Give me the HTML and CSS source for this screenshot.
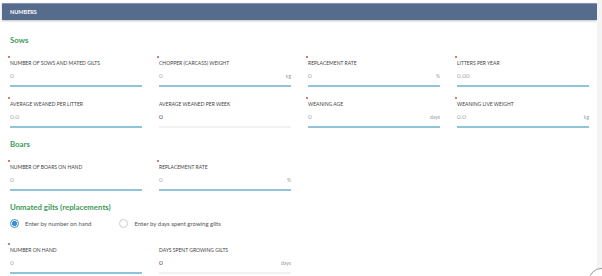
FILE: index.html
```html
<!DOCTYPE html>
<html>
<head>
  <meta charset="utf-8">
  <title>Numbers</title>
  <link rel="stylesheet" href="styles.css">
</head>
<body>
  <div class="page">
    <div class="panel">
      <div class="panel-header">NUMBERS</div>

      <div class="panel-body">
        <h2 class="section-title">Sows</h2>
        <div class="field-grid">
          <div class="field">
            <label class="field-label required">NUMBER OF SOWS AND MATED GILTS</label>
            <div class="field-input"><span class="value">0</span></div>
          </div>
          <div class="field">
            <label class="field-label required">CHOPPER (CARCASS) WEIGHT</label>
            <div class="field-input"><span class="value">0</span><span class="unit">kg</span></div>
          </div>
          <div class="field">
            <label class="field-label required">REPLACEMENT RATE</label>
            <div class="field-input"><span class="value">0</span><span class="unit">%</span></div>
          </div>
          <div class="field">
            <label class="field-label required">LITTERS PER YEAR</label>
            <div class="field-input"><span class="value">0.00</span></div>
          </div>
          <div class="field">
            <label class="field-label required">AVERAGE WEANED PER LITTER</label>
            <div class="field-input"><span class="value">0.0</span></div>
          </div>
          <div class="field">
            <label class="field-label">AVERAGE WEANED PER WEEK</label>
            <div class="field-input disabled"><span class="value">0</span></div>
          </div>
          <div class="field">
            <label class="field-label required">WEANING AGE</label>
            <div class="field-input"><span class="value">0</span><span class="unit">days</span></div>
          </div>
          <div class="field">
            <label class="field-label required">WEANING LIVE WEIGHT</label>
            <div class="field-input"><span class="value">0.0</span><span class="unit">kg</span></div>
          </div>
        </div>

        <h2 class="section-title">Boars</h2>
        <div class="field-grid">
          <div class="field">
            <label class="field-label required">NUMBER OF BOARS ON HAND</label>
            <div class="field-input"><span class="value">0</span></div>
          </div>
          <div class="field">
            <label class="field-label required">REPLACEMENT RATE</label>
            <div class="field-input"><span class="value">0</span><span class="unit">%</span></div>
          </div>
        </div>

        <h2 class="section-title">Unmated gilts (replacements)</h2>
        <div class="radio-row">
          <div class="radio checked"><span class="radio-dot"></span>Enter by number on hand</div>
          <div class="radio"><span class="radio-dot"></span>Enter by days spent growing gilts</div>
        </div>
        <div class="field-grid gilts">
          <div class="field">
            <label class="field-label required">NUMBER ON HAND</label>
            <div class="field-input"><span class="value">0</span></div>
          </div>
          <div class="field">
            <label class="field-label">DAYS SPENT GROWING GILTS</label>
            <div class="field-input disabled"><span class="value">0</span><span class="unit">days</span></div>
          </div>
        </div>
      </div>
    </div>
    <div class="scroll-track"></div>
  </div>
  <div class="help-button"></div>
</body>
</html>
```

FILE: styles.css
```css
body {
  margin: 0;
  font-family: Lato, "Open Sans", sans-serif;
  background-color: #fff;
  overflow: hidden;
}
.page {
  display: flex;
  height: 276px;
  overflow: hidden;
}
.panel {
  width: 595px;
  margin: 3px 0 0 2px;
}
.panel-header {
  height: 17px;
  line-height: 16px;
  padding-left: 8px;
  background-color: #566c8c;
  border-top: 1px solid #8593a8;
  box-sizing: border-box;
  box-shadow: 0 1px 2px rgba(0,0,0,0.25);
  color: #fff;
  font-size: 5.5px;
  font-weight: 700;
}
.panel-body {
  padding: 0 8px;
}
.scroll-track {
  flex: 1;
  background-color: #f4f4f4;
}
.section-title {
  margin: 10px 0 0;
  font-size: 7.8px;
  line-height: 12px;
  font-weight: 700;
  color: #3e9b58;
}
.panel-body > .section-title:first-child {
  margin-top: 14px;
}
.field-grid {
  display: grid;
  grid-template-columns: repeat(4, 132px);
  column-gap: 17px;
  row-gap: 14px;
  margin-top: 14px;
}
.field-grid.gilts {
  margin-top: 19px;
}
.field-label {
  position: relative;
  display: block;
  font-size: 5px;
  line-height: 6px;
  color: #444;
}
.field-label.required::before {
  content: "";
  position: absolute;
  left: -2px;
  top: -4px;
  width: 2px;
  height: 2px;
  border-radius: 50%;
  background-color: #c0504d;
}
.field-input {
  display: flex;
  justify-content: space-between;
  padding: 6px 0 5px;
  line-height: 8px;
  font-size: 6.5px;
  border-bottom: 2px solid #91c3da;
}
.field-input .value {
  color: #aaa;
}
.field-input .unit {
  color: #999;
  font-size: 5px;
}
.field-input.disabled {
  border-bottom-color: #f1f1f1;
}
.field-input.disabled .value {
  color: #555;
}
.radio-row {
  display: flex;
  gap: 28px;
  margin-top: 6px;
  line-height: 9px;
}
.radio {
  display: flex;
  align-items: center;
  gap: 6px;
  font-size: 6px;
  color: #555;
}
.radio-dot {
  width: 7px;
  height: 7px;
  border: 1px solid #ccc;
  border-radius: 50%;
}
.radio.checked .radio-dot {
  border-color: #3b8fd2;
  background: radial-gradient(circle, #3b8fd2 0 2.3px, #fff 2.8px);
}
.help-button {
  position: absolute;
  left: 589px;
  top: 268px;
  width: 22px;
  height: 22px;
  border: 1px solid #999;
  border-radius: 50%;
  background-color: #fff;
}
```
